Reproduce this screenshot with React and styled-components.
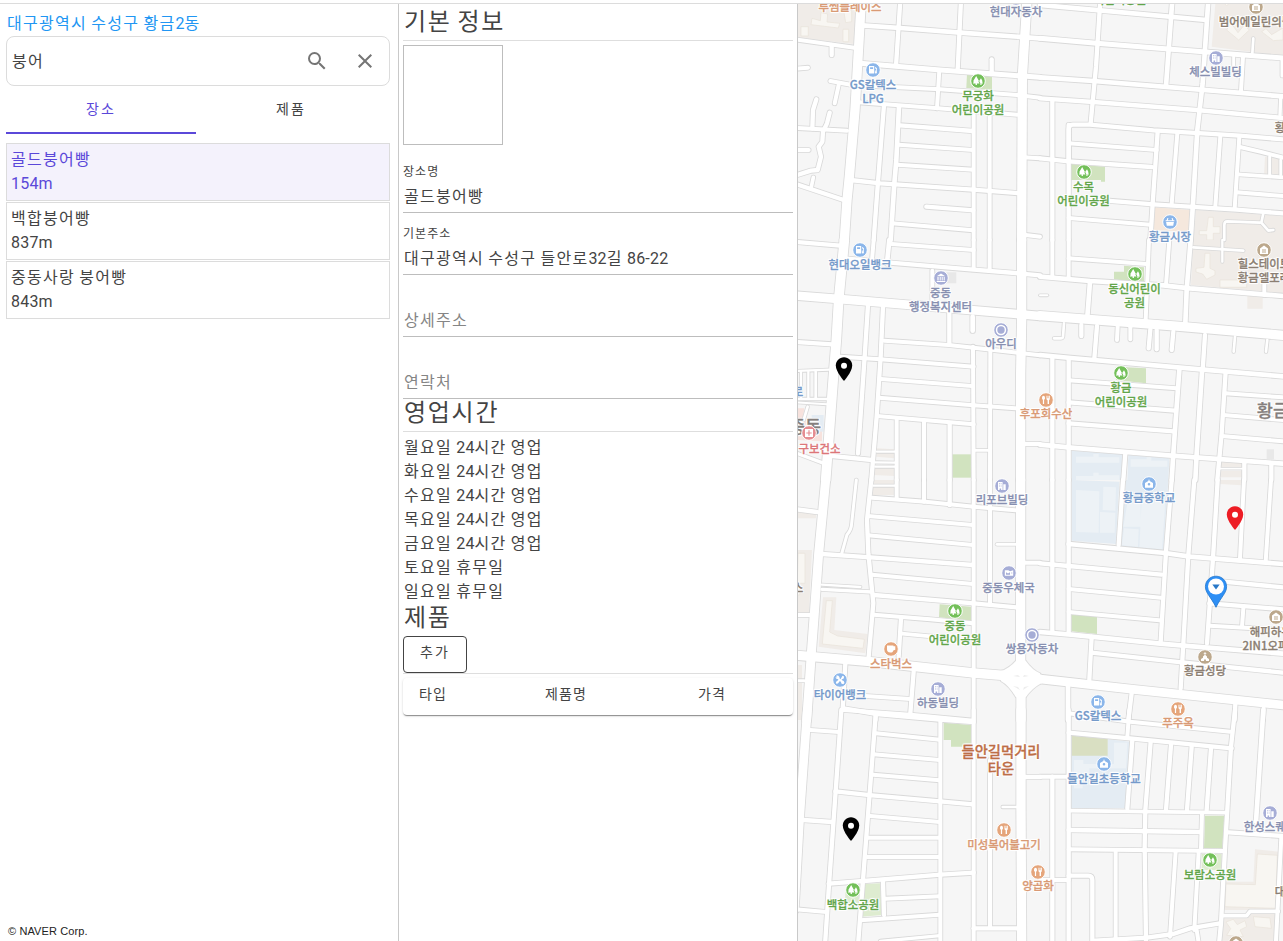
import React from "react";
import styled, { createGlobalStyle } from "styled-components";

const Global = createGlobalStyle`
  * { box-sizing: border-box; }
  html, body { margin: 0; height: 100%; overflow: hidden; background: #fff; }
  body { font-family: Roboto, "Noto Sans CJK KR", sans-serif; font-size: 16px; line-height: 24px; letter-spacing: 0.2px; color: #444; }
`;

/* ---------- text ---------- */

const Hangul = styled.span`
  letter-spacing: calc(${(p) => p.$base}px + 0.055em);
`;

const Ko = ({ children, base = 0.4 }) =>
  children
    .split(/([가-힣]+)/)
    .filter(Boolean)
    .map((t, i) => (/[가-힣]/.test(t) ? <Hangul key={i} $base={base}>{t}</Hangul> : t));

/* ---------- page layout ---------- */

const Page = styled.div`
  display: flex;
  flex-direction: column;
  width: 1283px;
  height: 941px;
  padding-top: 3px;
  overflow: hidden;
`;
const Columns = styled.div`
  display: flex;
  flex: 1;
  min-height: 0;
  border-top: 1px solid #dcdcdc;
`;
const SearchPanel = styled.aside`
  display: flex;
  flex-direction: column;
  width: 399px;
  flex: none;
  padding: 8px 8px 0 6px;
  border-right: 1px solid #c9c9c9;
`;
const DetailPanel = styled.section`
  width: 399px;
  flex: none;
  padding: 0 4px;
  border-right: 1px solid #c9c9c9;
`;

/* ---------- search panel ---------- */

const CurrentAddress = styled.div`
  height: 24px;
  padding-left: 1px;
  white-space: nowrap;
  color: #2196f3;
`;
const SearchBox = styled.div`
  display: flex;
  align-items: center;
  height: 50px;
  padding-left: 5px;
  border: 1px solid #dcdcdc;
  border-radius: 8px;
`;
const SearchText = styled.div`
  flex: 1;
  padding-top: 2px;
`;
const IconButton = styled.button`
  display: grid;
  place-items: center;
  width: 48px;
  height: 48px;
  padding: 0;
  border: 0;
  background: none;
  color: #757575;
`;
const Tabs = styled.div`
  display: flex;
  width: 380px;
  margin-bottom: 9px;
`;
const Tab = styled.button`
  flex: 1;
  height: 48px;
  padding: 0 0 1px;
  border: 0;
  border-bottom: 2px solid ${(p) => (p.$active ? "#5b48d9" : "transparent")};
  background: none;
  color: ${(p) => (p.$active ? "#5b48d9" : "#444")};
  font: 14px/20px Roboto, "Noto Sans CJK KR", sans-serif;
`;
const Results = styled.div`
  display: flex;
  flex-direction: column;
  gap: 1px;
`;
const Result = styled.div`
  height: 58px;
  padding: 4px;
  border: 1px solid #dcdcdc;
  background: ${(p) => (p.$active ? "#f4f2fc" : "#fff")};
  color: ${(p) => (p.$active ? "#5b48d9" : "#444")};
`;
const Copyright = styled.small`
  margin: auto 0 3px 2px;
  font: 11px/14px "Liberation Sans", Arial, sans-serif;
  letter-spacing: 0.12px;
  color: #222;
`;

/* ---------- detail panel ---------- */

const Heading = styled.h2`
  margin: 0;
  height: ${(p) => p.$h}px;
  padding-left: 1px;
  font-size: 24px;
  line-height: ${(p) => p.$lh || 32}px;
  font-weight: 400;
  letter-spacing: 0;
  border-bottom: ${(p) => (p.$line ? "1px solid #dedede" : "0")};
`;
const Photo = styled.div`
  width: 100px;
  height: 100px;
  margin: 4px 0 6px;
  border: 1px solid #bdbdbd;
`;
const Field = styled.div`
  display: flex;
  flex-direction: column;
  justify-content: flex-end;
  height: 62px;
  padding-bottom: 3px;
  border-bottom: 1px solid #bdbdbd;
  color: ${(p) => (p.$empty ? "#858585" : "#444")};
`;
const FieldLabel = styled.div`
  font-size: 12px;
  line-height: 16px;
  margin-bottom: 5px;
`;
const FieldValue = styled.div`
  line-height: 24px;
  padding-left: 1px;
`;
const Hours = styled.div`
  padding: 4px 0 0 1px;
  height: 171px;
`;
const AddButton = styled.button`
  display: block;
  width: 64px;
  height: 37px;
  padding: 0 0 5px;
  border: 1px solid #444;
  border-radius: 4px;
  background: #fff;
  color: #444;
  font: 14px/20px Roboto, "Noto Sans CJK KR", sans-serif;
`;
const ProductArea = styled.div`
  padding-top: 4px;
  border-top: 1px solid #dedede;
`;
const ProductHead = styled.div`
  display: grid;
  grid-template-columns: 126px 153px 1fr;
  height: 37px;
  padding: 6px 16px 0;
  border-radius: 4px;
  font-size: 14px;
  line-height: 20px;
  box-shadow: 0 2px 1px -1px rgba(0, 0, 0, 0.28), 0 1px 1px rgba(0, 0, 0, 0.16), 0 1px 3px rgba(0, 0, 0, 0.13);
`;

/* ---------- map ---------- */

const MapArea = styled.main`
  position: relative;
  flex: 1;
  overflow: hidden;
  background: #f6f6f6;
`;
const Ground = styled.svg`
  display: block;
`;
const Place = styled.div`
  position: absolute;
  left: ${(p) => p.$x - 798}px;
  top: ${(p) => p.$y - 4}px;
  transform: translateX(-50%);
  text-align: center;
  white-space: nowrap;
  color: ${(p) => p.$color};
  font: ${(p) => p.$weight || 500} ${(p) => p.$size || 11.4}px/${(p) => p.$lh || 14}px "Noto Sans CJK KR", sans-serif;
  letter-spacing: 0;
  -webkit-text-stroke: 0.3px ${(p) => p.$color};
  text-shadow: 1px 0 #fff, -1px 0 #fff, 0 1px #fff, 0 -1px #fff, 1px 1px 1px #fff, -1px -1px 1px #fff, 1px -1px 1px #fff, -1px 1px 1px #fff;
`;
const Badge = styled.svg`
  position: absolute;
  left: ${(p) => p.$x - 798}px;
  top: ${(p) => p.$y - 4}px;
  transform: translate(-50%, -50%);
`;
const Marker = styled.svg`
  position: absolute;
  left: ${(p) => p.$x - 798}px;
  top: ${(p) => p.$y - 4}px;
  transform: translateX(-50%);
`;

const PARK = "#d1e3bf";
const LAWN = "#deecd0";
const SCHOOL = "#e4ecf3";
const ESTATE = "#f0ece8";
const HOUSE = "#f8f6f2";

/* Each tile is drawn at three units per pixel: areas are [fill, path], roads are [width, path]. */
const tiles = [
  {
    x: 797, y: 0,
    areas: [
      [ESTATE, "M0 0H180L170 132 0 112Z"],
      [HOUSE, "M45 55L70 62 72 38 92 42 90 66 128 70 124 84 42 74ZM12 80H34V108H12ZM140 30H164V65L146 68ZM138 88H155V125H138Z"],
      [PARK, "M510 222L585 226V270L508 264Z"],
    ],
    roads: [
      [28, "M193 0L174 330 157 530 150 600 142 720"], [28, "M690 0L676 230 674 720"],
      [13, "M310 0L297 198"], [13, "M492 0L482 210"], [14, "M195 76L310 84 490 98 729 115"],
      [15, "M190 190L430 210 729 232"], [13, "M584 178V215"], [12, "M100 243L165 255 430 268 660 285 729 293"],
      [12, "M125 255L113 310"], [12, "M185 307L415 324 660 344"], [12, "M427 210L420 325"],
      [13, "M261 315L243 545 230 720"], [14, "M306 320L298 480 292 550 281 720"],
      [13, "M308 376L528 393"], [12, "M305 434L528 450"], [12, "M300 494L528 509"],
      [13, "M160 540L250 550 529 569 668 580"], [13, "M388 620L529 631"], [12, "M285 670L529 691"],
      [12, "M530 345V720"], [12, "M578 345V720"], [12, "M680 472L729 475"], [12, "M680 704L729 710"],
      [12, "M0 119L172 143"], [13, "M104 135V165"], [12, "M0 206L33 203"], [13, "M58 298L48 330 46 385"],
      [12, "M0 384L150 392"], [13, "M98 338L90 370 78 395 76 425 65 440 72 470 62 510 42 512 0 525"],
      [12, "M0 450H35"], [11, "M49 532L42 565"], [13, "M0 553L140 600"],
    ],
  },
  {
    x: 1040, y: 0,
    areas: [
      [ESTATE, "M527 0L515 140 729 168V0Z"],
      [HOUSE, "M560 90L572 68 594 98 612 76 628 90 596 120ZM665 95L678 86 695 104 729 84V120L700 122ZM545 0H575L560 18Z"],
      ["#f5e8dd", "M345 622L452 630 445 695 340 690Z"], [ESTATE, "M468 630L729 648V720H460Z"],
      [ESTATE, "M675 470L729 480V525H672Z"],
      [HOUSE, "M505 652H520V680H540V700H520V720H500V704H478V692H500Z"],
      [PARK, "M93 492L195 500V545H183V540H93Z"],
    ],
    roads: [
      [14, "M0 15L180 31 500 60"], [15, "M0 115L170 130 385 147 729 174"], [14, "M0 232L160 243 480 269 729 289"],
      [13, "M0 295L160 306 470 330 729 354"], [13, "M86 485V388Q86 374 98 374L150 374 340 391 600 407 729 418"],
      [13, "M181 0L168 200 152 370"], [14, "M397 0L378 258"], [14, "M505 0L488 250 472 390 459 610 452 720"],
      [13, "M37 300V720"], [13, "M86 375V720"], [12, "M86 430L350 450"], [13, "M0 475L86 484 335 501"],
      [13, "M353 395L338 610 331 720"], [12, "M412 400L395 612"], [12, "M541 408L526 618"], [12, "M598 410L584 625"],
      [13, "M190 601L340 613 590 629 729 640"], [12, "M86 654L330 674"], [12, "M600 441L660 455 729 473"],
      [11, "M595 523L729 532"], [12, "M590 577L729 588"], [9, "M689 470V525"], [8, "M722 480V525"], [12, "M609 170L603 272"],
      [9, "M581 170V200"], [8, "M640 115L637 160"], [9, "M726 180V228"], [10, "M722 295L720 345"],
      [8, "M553 720V675Q553 664 562 664L660 668"], [8, "M670 640L664 668 685 692 700 690"],
    ],
  },
  {
    x: 797, y: 240,
    areas: [
      ["#f7e2dd", "M0 505H22L18 535H75V604L0 600Z"], [SCHOOL, "M44 525H80V575H44Z"],
      [ESTATE, "M240 625L292 628V655L238 650ZM233 685H292V708L230 705Z"], [PARK, "M466 643H522V713H466Z"],
      ["#e8e8e8", "M450 97H478V130H450Z"],
    ],
    roads: [
      [29, "M142 0L125 180 118 300 110 400 95 600 86 720"], [28, "M674 0V240L671 400V720"],
      [12, "M530 0V85"], [12, "M578 0V90"], [14, "M527 230V272"], [12, "M528 320L530 720"], [12, "M580 330L579 720"],
      [13, "M0 6L130 17"], [12, "M284 12L530 30"], [12, "M230 0L225 60"], [14, "M277 0L270 70"],
      [13, "M150 56L280 68 530 89 665 100 729 106"], [12, "M406 92V185"],
      [26, "M0 167L140 178 400 200 660 222 729 228"], [13, "M213 195L203 350 183 640"],
      [13, "M258 200L251 350 239 530 223 720"], [13, "M0 306L105 313"], [12, "M130 350L250 358 530 380"],
      [12, "M262 302L455 315 530 323 729 346"], [13, "M457 215V312"], [12, "M252 417L525 438"],
      [12, "M245 473L530 496 655 505"], [12, "M240 528L530 553"], [12, "M299 540V720"], [12, "M381 545V720"],
      [13, "M458 552V720"], [8, "M530 631H578"], [12, "M685 612H729"], [13, "M95 647L225 660"], [10, "M0 640L75 668"],
      [7, "M0 393L95 389"], [7, "M12 395V472"], [7, "M34 395V472"], [8, "M56 395V472"], [8, "M0 477H92"], [6, "M0 487L90 493"],
      [8, "M32 500L20 540"], [7, "M240 635L295 635"], [7, "M235 667L295 668"], [7, "M235 680L295 680"],
    ],
  },
  {
    x: 1040, y: 240,
    areas: [
      [ESTATE, "M460 0L453 135 729 160V0Z"], [HOUSE, "M495 40H510V85L525 92V105L500 118 488 102 468 96V85L492 82ZM540 120H620V142H540Z"],
      [ESTATE, "M622 168H668V206H622ZM541 662H607V684H541ZM541 692H607V712H541Z"], ["#e8e8e8", "M680 628H702V658H680Z"],
      [PARK, "M222 95H252V77L312 82V130L222 118ZM230 380L318 385V430L228 420Z"],
      [SCHOOL, "M95 632L247 642V720H95ZM265 645L388 655 385 720H262Z"],
      ["#edf2f6", "M108 650H160V642H176V652H238V668H108ZM108 708H160V698H176V706H238V720H108ZM272 658H320V652H334V662H382V680H272Z"],
    ],
    roads: [
      [12, "M37 0V110"], [12, "M86 0V115"], [13, "M37 350V720"], [13, "M86 355V720"], [12, "M86 55L320 72"],
      [12, "M327 0L317 240"], [12, "M388 0L378 135"], [14, "M452 0L440 150 436 250"],
      [14, "M0 110L150 123 370 136 450 145 729 168"], [14, "M150 125L142 230"], [6, "M0 166H22"],
      [28, "M0 227L430 260 729 286"], [8, "M72 250L69 290Q68 295 62 295H42"], [13, "M124 255V288"], [12, "M233 260L231 300"],
      [12, "M271 262V298"], [13, "M331 268L326 325"], [13, "M350 270V328"], [13, "M400 275L395 330"], [8, "M585 290L581 335"],
      [8, "M682 300L678 335"], [13, "M171 258L163 355"], [13, "M495 285L488 390"], [14, "M0 345L93 354 490 389 729 409"],
      [14, "M418 390L410 500 400 640 395 720"], [14, "M486 395L470 640 466 720"], [13, "M557 395L545 580 532 720"],
      [12, "M86 421L410 445"], [13, "M86 487L405 512"], [13, "M86 550L400 574"], [14, "M0 614L93 623 395 647 729 671"],
      [12, "M556 460L729 472"], [12, "M550 525L729 540"], [12, "M545 588L729 604"], [13, "M256 640L250 720"],
      [13, "M613 670V720"], [13, "M694 675V720"], [8, "M460 22L610 32"], [7, "M547 0V65"], [12, "M673 130V165"], [5, "M540 686H607"],
    ],
  },
  {
    x: 797, y: 480,
    areas: [
      [ESTATE, "M0 95H57V115H0ZM0 210H45L36 400H0ZM78 352H118L112 450 212 462 205 520 65 500ZM0 555H15V720H0Z"],
      [HOUSE, "M88 362H106L98 456 122 468 202 478 198 505 76 492ZM3 220H24V310H8V345H0Z"],
      [ESTATE, "M230 0H292V12H230ZM228 22H292V45H228Z"], [PARK, "M428 373L522 380V422L426 412Z"],
    ],
    roads: [
      [27, "M86 0L65 220 52 400 43 520 34 650 29 720"], [28, "M671 0V550"], [28, "M672 620V720"],
      [28, "M0 526L220 545 530 579 640 588"], [28, "M700 592L729 597"], [12, "M530 0V720"], [12, "M579 0V370"],
      [12, "M225 53L385 65 530 80 655 91"], [12, "M213 108L528 135"], [12, "M213 166L528 195"],
      [13, "M75 222L220 232 528 255"], [12, "M225 284L528 312"], [13, "M230 345L530 370 658 382"], [12, "M230 404L400 418 528 430"],
      [13, "M223 0L210 120 214 220 229 370 215 530"], [9, "M178 0L164 130Q163 150 150 164L133 225"],
      [12, "M299 0V55"], [12, "M381 0V65"], [13, "M458 0V75"], [7, "M230 17H295"], [8, "M600 193H658"],
      [10, "M75 328L225 336"], [7, "M75 314L190 321"], [13, "M312 415L305 530"], [11, "M315 461L410 470"], [12, "M685 248H729"],
      [13, "M0 88L60 96"], [12, "M0 405H40"], [13, "M145 552L137 690"], [12, "M205 648L340 657"], [12, "M140 690L350 705 529 722"],
      [13, "M350 575L340 700"], [12, "M236 700V720"], [9, "M0 602H22"],
    ],
    squares: ["M612 573Q636 566 657 542H686Q706 570 729 580V612Q706 624 686 652H657Q636 616 612 603Z"],
  },
  {
    x: 1040, y: 480,
    areas: [
      [SCHOOL, "M95 0L238 5 228 192 95 182ZM258 0H385L370 212 242 200Z"],
      ["#edf2f6", "M108 30L178 34 176 158 108 156ZM190 20L228 22 226 92 188 90ZM180 96L226 98 224 158H180ZM262 70H302V140H250ZM305 60L376 64 366 208 298 202ZM252 145L296 148 294 200 246 196Z"],
      [PARK, "M94 403L171 410V462L94 454Z"], [ESTATE, "M541 0H605V16L541 12Z"],
    ],
    roads: [
      [13, "M37 0V455"], [13, "M86 0V460"], [14, "M0 456L93 464 360 491 430 497 729 521"],
      [13, "M0 250L86 258 365 284"], [14, "M86 192L375 219 450 230 729 252"], [12, "M86 327L362 353"], [12, "M86 396L358 421"],
      [13, "M249 0L236 195"], [13, "M395 0L378 215 362 485"], [13, "M463 0L445 225 430 490 422 625"],
      [13, "M533 0L519 235 501 490"], [12, "M612 0L600 235"], [12, "M693 0L677 245"], [13, "M520 302L729 322"],
      [13, "M508 370L729 388"], [12, "M610 385L606 440"], [12, "M508 437L729 450"], [13, "M155 470L148 600"],
      [13, "M155 518L425 547 729 578"], [26, "M0 597L280 628 729 675"], [14, "M84 620V720"], [13, "M275 640L265 720"],
      [13, "M586 672L584 720"], [12, "M671 685L669 720"],
    ],
  },
  {
    x: 797, y: 710,
    areas: [
      [PARK, "M440 38L522 45V110H462V90H440Z"], [LAWN, "M200 522L250 520 253 615 195 620ZM145 545H185V580H145Z"],
    ],
    roads: [
      [26, "M31 0L8 320 -8 600"], [13, "M133 0L117 230 97 510 83 720"], [13, "M236 15L218 250 198 510 182 720"],
      [12, "M430 30V692"], [12, "M530 0V692"], [12, "M579 150V650"], [28, "M672 0V300L674 692"],
      [12, "M40 60L125 66"], [13, "M140 -5L240 12 428 29 530 36"], [12, "M238 70L428 89"], [12, "M230 133L428 150"],
      [12, "M228 194L428 211"], [13, "M115 244L225 256 428 274 528 283"], [12, "M220 318L428 336"], [12, "M213 383H428"],
      [12, "M210 441H428"], [13, "M95 521L200 513 430 494 530 488"], [12, "M0 598L88 606"], [13, "M20 330L105 336"],
      [13, "M258 515L261 615"], [12, "M265 566L428 559"], [12, "M190 631L428 614"], [10, "M250 694L428 677"],
      [13, "M530 655H665"], [8, "M617 291H660"], [13, "M685 201H729"],
    ],
  },
  {
    x: 1040, y: 710,
    areas: [
      [SCHOOL, "M93 75L270 95 258 295H93Z"], ["#edf2f6", "M222 98H262L258 175H148V190H128V235H102V150H130V162H222Z"],
      ["#d9dfc2", "M95 77L203 87V137H95Z"], [PARK, "M495 317H553L547 415H492Z"], [LAWN, "M485 432H545V480H485Z"],
      [ESTATE, "M645 418L717 425V600L552 600V515H640ZM548 625H620L635 610H715L700 692H545Z"],
      [HOUSE, "M652 432L712 436 706 595 555 590 558 522 646 524ZM558 636L580 628 592 644 615 632 620 650 600 660 610 680 560 676 572 656ZM640 620L690 624 694 655 645 650Z"],
    ],
    roads: [
      [13, "M37 200V692"], [13, "M86 0V692"], [12, "M0 200H86"], [12, "M0 510H86"], [12, "M268 0L262 80"],
      [12, "M86 10L270 35 570 65"], [13, "M86 68L270 85 575 115"], [13, "M585 0L573 110 556 400 543 640 538 692"],
      [13, "M277 90L262 295"], [13, "M332 95L316 300 314 410 318 692"], [13, "M393 105L378 300"], [13, "M455 110L441 300"],
      [13, "M513 115L500 300"], [11, "M86 302L555 308"], [13, "M86 360L480 366"], [12, "M86 418L550 423"],
      [12, "M486 310L483 415"], [12, "M227 425V692"], [12, "M407 425L390 680"], [12, "M476 425L463 660"],
      [13, "M86 497H145Q157 497 157 510V692"], [13, "M165 692L320 683 400 672 450 655 540 640"], [12, "M470 660L475 692"],
      [13, "M565 367L729 378"], [14, "M670 0L648 335"], [12, "M724 380L708 692"], [11, "M545 617H620L630 604H715"],
    ],
  },
];

const Tile = ({ tile, children }) => <g transform={`translate(${tile.x - 798} ${tile.y - 4}) scale(.33333)`}>{children}</g>;

const Roads = ({ color, extra }) => (
  <g fill="none" stroke={color} strokeLinecap="round" strokeLinejoin="round">
    {tiles.map((t, i) => (
      <Tile key={i} tile={t}>
        {t.roads.map(([w, d]) => <path key={d} d={d} strokeWidth={w + extra} />)}
        {(t.squares || []).map((d) => <path key={d} d={d} fill={color} strokeWidth={extra + 0.5} />)}
      </Tile>
    ))}
  </g>
);

const BLUE = "#759aca";
const GREEN = "#62a54a";
const VIOLET = "#878fb0";
const ORANGE = "#d99a75";
const BROWN = "#8b7e72";
const RED = "#dc7679";
const DISTRICT = "#857f7d";

const badgeColor = {
  fuel: "#8bb6ea", market: "#8bb6ea", school: "#8bb6ea", tire: "#8bb6ea", tree: "#74c05a",
  building: "#a6add6", bank: "#a6add6", post: "#a6add6", dot: "#a6add6", food: "#e5a57b", cup: "#e5a57b",
  home: "#bca88c", church: "#bca88c", hospital: "#e58d91",
};
const glyphs = {
  tree: <path d="M6.2 3L3 8.4h1L2.8 10.5h2.8V12h1.3v-1.5h2.6L8.2 8.3h.9zM11 5.2L9.2 8l1.3 2.500h-.1V12h1.100v-1.500H13L12 8.600h.7z" />,
  fuel: <path fillRule="evenodd" d="M4 4h5.2v7.600H4zM5.100 5.200v1.900h3V5.200zM10 5l1.900 1v4.500c0 1.400-2 1.400-2 0V8.600h.9v1.700h.3V7l-1.100-.8z" />,
  building: <path fillRule="evenodd" d="M4 4h4.600v8H7.100v-1.400H5.600V12H4zM5.200 5.300v1h.8v-1zm1.500 0v1h.8v-1zM5.200 7.400v1h.8v-1zm1.500 0v1h.8v-1zM9.300 6.300h2.400V12H9.300z" />,
  bank: <path d="M8 3.500l4.300 2.700H3.700zM4.400 6.900h1.200v3.700H4.400zm2.300 0h1v3.700h-1zm2 0h1v3.700h-1zm2 0h1v3.700h-1zM3.700 11h8.600v1H3.700z" />,
  food: <path d="M4 5.900c0-3 3-3 3 0 0 1-.5 1.600-.9 1.900V12H4.900V7.800C4.500 7.500 4 6.900 4 5.900zM8.500 3.800h.8v2.500h.5V3.800h.7v2.500h.5V3.800h.8v3c0 .8-.4 1.200-.8 1.400V12H9.600V8.200c-.7-.2-1.100-.6-1.100-1.400z" />,
  school: <path fillRule="evenodd" d="M8 3l.7 1.900L12 7v4.700H4V7l3.300-2.100zM8 6.900a1.300 1.300 0 100 2.600 1.300 1.300 0 000-2.600z" />,
  market: <path d="M5.400 4h1l-.6 2.200h4.400L9.600 4h1l.8 2.200h1v1H3.600v-1h1zM4.100 8h7.800l-.7 3.700H4.800z" />,
  dot: <><circle cx="8" cy="8" r="5.200" /><circle cx="8" cy="8" r="3.700" fill="#a6add6" /></>,
  post: <path fillRule="evenodd" d="M3.800 5.200h3.500L9 6.300l3.200-1v5.500H3.800zM5 7.300l2 1.300 2-1.300v2.500H5zM10.300 7.500v1h1v-1z" />,
  home: <path fillRule="evenodd" d="M8 3.500l4 3V12H4V6.500zM6 7.600v.9h4v-.9zm0 1.900v.9h4v-.9z" />,
  church: <path d="M7.600 3h.8v1h.9v.8h-.9v1.100L10 7.500v1.200l2 1.300v2H8.900v-1.600H7.100V12H4v-2l2-1.300V7.500l1.600-1.600V4.800h-.9V4h.9z" />,
  hospital: <path fillRule="evenodd" d="M4 4h8v8H4zM7.400 5.300v2.100H5.300v1.200h2.100v2.100h1.200V8.600h2.100V7.400H8.600V5.300z" />,
  cup: <path fillRule="evenodd" d="M4 4.600h6.400v.7h1.900v3.500l-2 .6c-.5 1.500-1.200 2.200-2.900 2.200C4.700 11.600 4 10 4 8.300z" />,
  tire: <path d="M4 3.700l2-.2 1.500 1.600v1.200l1 .9 2-3.500 1.600.7-.4 2.100-2.200 1 1 1.100 1.200.3.8 2-1.300 1.300-1.900-.8-.3-1.300-1.100-1.100-2 2.500-1.700.2-.3-1.600 2.600-2.300-.9-.9-1.300-.2L3.500 5l1.700.6z" />,
};

const places = [
  ["fuel", 873, 70, BLUE, "GS칼텍스", "LPG"], ["tree", 978, 81, GREEN, "무궁화", "어린이공원"],
  ["building", 1215.5, 57.5, VIOLET, "체스빌빌딩"], ["home", 1255.5, 7, BROWN, "범어에일린의뜰"],
  ["building", 1016, -2.5, VIOLET, "현대자동차"], ["tree", 1083.5, 172, GREEN, "수목", "어린이공원"],
  ["market", 1170, 222, BLUE, "황금시장"], ["fuel", 860, 250, BLUE, "현대오일뱅크"],
  ["bank", 940.5, 278, VIOLET, "중동", "행정복지센터"], ["home", 1264, 249.5, BROWN, "힐스테이트", "황금엘포레"],
  ["tree", 1134.5, 274, GREEN, "동신어린이", "공원"], ["dot", 1001, 329.5, VIOLET, "아우디"],
  ["tree", 1121, 373, GREEN, "황금", "어린이공원"], ["food", 1046, 399.5, ORANGE, "후포회수산"],
  ["building", 1002, 485.5, VIOLET, "리포브빌딩"], ["school", 1149, 483.5, BLUE, "황금중학교"],
  ["post", 1008.5, 573, VIOLET, "중동우체국"], ["tree", 955, 611, GREEN, "중동", "어린이공원"],
  ["dot", 1032, 634.5, VIOLET, "쌍용자동차"], ["tire", 840, 680, BLUE, "타이어뱅크"],
  ["cup", 891, 649, ORANGE, "스타벅스"], ["building", 938, 688.5, VIOLET, "하동빌딩"],
  ["home", 1276, 617, BROWN, "해피하우스", "2IN1오피스텔"], ["church", 1205, 656.5, BROWN, "황금성당"],
  ["fuel", 1098, 701.5, BLUE, "GS칼텍스"], ["food", 1178, 708.5, ORANGE, "푸주옥"],
  ["school", 1104, 764, BLUE, "들안길초등학교"], ["building", 1270, 812.5, VIOLET, "한성스퀘어"],
  ["food", 1004, 830, ORANGE, "미성복어불고기"], ["food", 1038, 871.5, ORANGE, "양곱화"],
  ["tree", 1210, 860, GREEN, "보람소공원"], ["tree", 853, 890, GREEN, "백합소공원"],
  ["hospital", 809, 433, RED], ["home", 1236, 942.5, BROWN],
];

const names = [
  { x: 850, y: -1.5, color: ORANGE, text: "투썸플레이스" },
  { x: 1120, y: -8, color: GREEN, text: "어린이공원" },
  { x: 1280, y: 119.5, color: BROWN, text: "황" },
  { x: 798, y: 384, color: BLUE, text: "로" },
  { x: 819.5, y: 440.5, color: RED, text: "구보건소" },
  { x: 798, y: 579.5, color: BROWN, text: "스" },
  { x: 1280, y: 883.5, color: BROWN, text: "대" },
  { x: 1281, y: 400, color: DISTRICT, text: "황금동", size: 17.5, lh: 20 },
  { x: 805, y: 416, color: DISTRICT, text: "중동", size: 17.5, lh: 20 },
];

const Pin = ({ x, y, color }) => (
  <Marker $x={x} $y={y} width="18" height="25" viewBox="0 0 18 25">
    <path d="M9 .3C4.3.3.8 4 .8 8.5.8 14.8 9 24 9 24s8.200-9.200 8.200-15.500C17.200 4 13.700.3 9 .3z" fill={color} />
    <circle cx="9" cy="8.7" r="3" fill="#fff" />
  </Marker>
);

const TownMap = () => (
  <MapArea>
    <Ground width="485" height="937" viewBox="0 0 485 937">
      <rect width="485" height="937" fill="#f6f6f6" />
      {tiles.map((t, i) => (
        <Tile key={i} tile={t}>
          {t.areas.map(([fill, d]) => (
            <path key={d} d={d} fill={fill} stroke={fill === HOUSE ? "#e8e2da" : "none"} strokeWidth="2" />
          ))}
        </Tile>
      ))}
      <Roads color="#d9d9d9" extra={5} />
      <Roads color="#fff" extra={0} />
      <path d="M215 672l5-1 2 2zM231 672l-5-1-1 2zM215 682l5 1 2 3zM231 682l-5 1-1 3z" fill="#ededed" />
    </Ground>
    {names.map((n) => (
      <Place key={n.text + n.x} $x={n.x} $y={n.y} $color={n.color} $size={n.size} $lh={n.lh}>{n.text}</Place>
    ))}
    {places.map(([kind, x, y, color, ...lines]) => (
      <React.Fragment key={`${x}-${y}`}>
        <Place $x={x} $y={Math.round(y + 6.5)} $color={color}>
          {lines.map((l) => <div key={l}>{l}</div>)}
        </Place>
        <Badge $x={x} $y={y} width="16" height="16" viewBox="0 0 16 16">
          <circle cx="8" cy="8" r="7.3" fill={badgeColor[kind]} stroke="#fff" strokeWidth="1" />
          <g fill="#fff">{glyphs[kind]}</g>
        </Badge>
      </React.Fragment>
    ))}
    <Place $x={1001} $y={742} $color="#bd6e47" $size={14.3} $lh={17}>
      <div>들안길먹거리</div>
      <div>타운</div>
    </Place>
    <Pin x={844} y={357} color="#000" />
    <Pin x={851} y={817} color="#000" />
    <Pin x={1235} y={506} color="#ed1c24" />
    <Marker $x={1216} $y={575} width="24" height="33" viewBox="0 0 24 33">
      <path d="M12 1.200C6 1.200 1.400 5.800 1.400 11.700 1.400 18 7 22 12 32.300 17 22 22.600 18 22.600 11.700 22.600 5.800 18 1.200 12 1.200z" fill="#2e8ff5" stroke="#2477cc" strokeWidth=".8" />
      <circle cx="12" cy="11.5" r="8" fill="#fff" />
      <path d="M8.300 9.400h7.400L12 14.400z" fill="#2878c8" />
    </Marker>
  </MapArea>
);

const results = [["골드붕어빵", "154m"], ["백합붕어빵", "837m"], ["중동사랑 붕어빵", "843m"]];
const hours = [
  "월요일 24시간 영업", "화요일 24시간 영업", "수요일 24시간 영업", "목요일 24시간 영업", "금요일 24시간 영업",
  "토요일 휴무일", "일요일 휴무일",
];

export default function App() {
  return (
    <Page>
      <Global />
      <Columns>
        <SearchPanel>
          <CurrentAddress><Ko>대구광역시 수성구 황금2동</Ko></CurrentAddress>
          <SearchBox>
            <SearchText><Ko>붕어</Ko></SearchText>
            <IconButton aria-label="검색">
              <svg width="24" height="24" viewBox="0 0 24 24" fill="currentColor">
                <path d="M15.500 14h-.79l-.28-.27A6.471 6.471 0 0016 9.500 6.500 6.500 0 109.500 16c1.610 0 3.090-.59 4.230-1.570l.27.28v.79l5 4.990L20.490 19l-4.990-5zm-6 0C7.010 14 5 11.990 5 9.500S7.010 5 9.500 5 14 7.010 14 9.500 11.990 14 9.500 14z" />
              </svg>
            </IconButton>
            <IconButton aria-label="지우기">
              <svg width="24" height="24" viewBox="0 0 24 24" fill="currentColor">
                <path d="M19 6.410L17.590 5 12 10.590 6.410 5 5 6.410 10.590 12 5 17.590 6.410 19 12 13.410 17.590 19 19 17.590 13.410 12z" />
              </svg>
            </IconButton>
          </SearchBox>
          <Tabs>
            <Tab $active><Ko base={1.25}>장소</Ko></Tab>
            <Tab><Ko base={1.25}>제품</Ko></Tab>
          </Tabs>
          <Results>
            {results.map(([name, dist], i) => (
              <Result key={name} $active={i === 0}>
                <div><Ko>{name}</Ko></div>
                <div>{dist}</div>
              </Result>
            ))}
          </Results>
          <Copyright>© NAVER Corp.</Copyright>
        </SearchPanel>
        <DetailPanel>
          <Heading $h={37} $lh={36} $line><Ko base={0.4}>기본 정보</Ko></Heading>
          <Photo />
          <Field>
            <FieldLabel><Ko>장소명</Ko></FieldLabel>
            <FieldValue><Ko>골드붕어빵</Ko></FieldValue>
          </Field>
          <Field>
            <FieldLabel><Ko>기본주소</Ko></FieldLabel>
            <FieldValue><Ko>대구광역시 수성구 들안로32길 86-22</Ko></FieldValue>
          </Field>
          <Field $empty><FieldValue><Ko>상세주소</Ko></FieldValue></Field>
          <Field $empty><FieldValue><Ko>연락처</Ko></FieldValue></Field>
          <Heading $h={33} $lh={28} $line><Ko base={0.4}>영업시간</Ko></Heading>
          <Hours>
            {hours.map((h) => <div key={h}><Ko>{h}</Ko></div>)}
          </Hours>
          <Heading $h={33} $lh={31}><Ko base={0.4}>제품</Ko></Heading>
          <AddButton><Ko base={1.25}>추가</Ko></AddButton>
          <ProductArea>
            <ProductHead>
              <span><Ko>타입</Ko></span>
              <span><Ko>제품명</Ko></span>
              <span><Ko>가격</Ko></span>
            </ProductHead>
          </ProductArea>
        </DetailPanel>
        <TownMap />
      </Columns>
    </Page>
  );
}
